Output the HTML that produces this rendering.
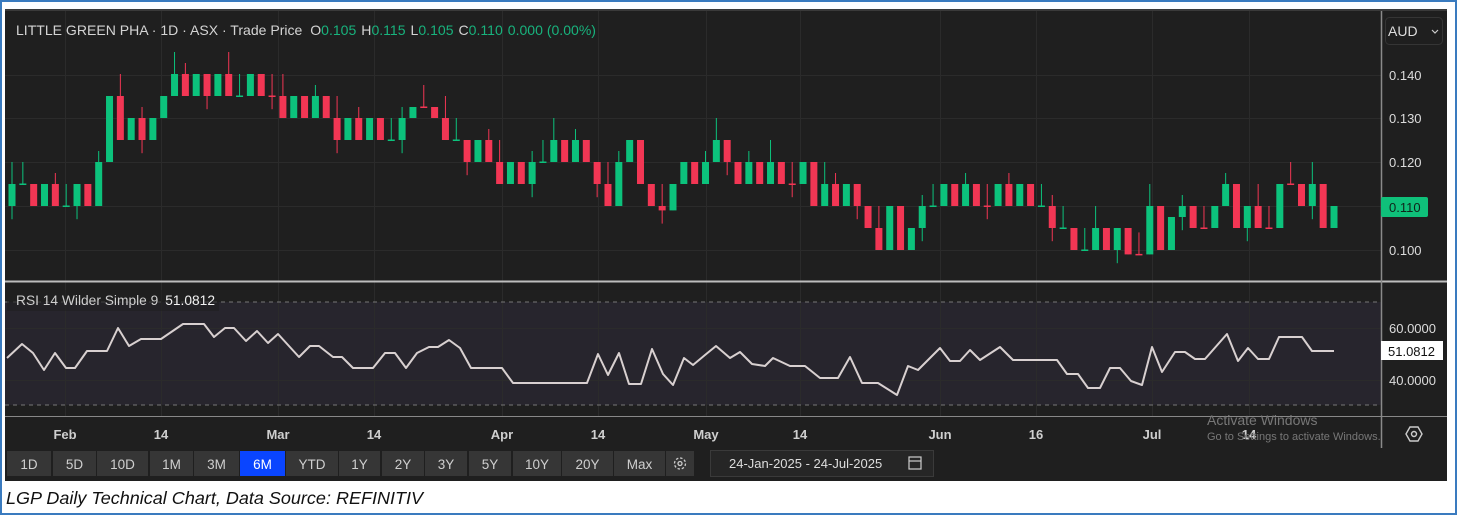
<!DOCTYPE html>
<html><head><meta charset="utf-8"><style>
html,body{margin:0;padding:0;background:#fff;width:1458px;height:516px;overflow:hidden}
svg{display:block;font-family:"Liberation Sans",sans-serif}
</style></head><body>
<svg id="s" width="1458" height="516" viewBox="0 0 1458 516" xmlns="http://www.w3.org/2000/svg">
<rect x="0" y="0" width="1458" height="516" fill="#fff"/>
<rect x="1" y="1" width="1455" height="513" fill="none" stroke="#3a7bbf" stroke-width="2"/>
<rect x="5" y="9" width="1442" height="472" fill="#1f1f1f"/>
<rect x="5" y="9" width="1442" height="2" fill="#3a3a3a"/>
<rect x="5" y="302" width="1376" height="103" fill="#27252d"/>
<g id="grid" stroke="#2b2b2b" stroke-width="1"></g>
<line x1="5" y1="302" x2="1381" y2="302" stroke="#777" stroke-dasharray="4,4"/>
<line x1="5" y1="405" x2="1381" y2="405" stroke="#777" stroke-dasharray="4,4"/>
<g id="candles"></g>
<line x1="5" y1="281.5" x2="1447" y2="281.5" stroke="#bdbdbd" stroke-width="2"/>
<line x1="5" y1="416.5" x2="1447" y2="416.5" stroke="#888" stroke-width="1"/>
<line x1="1381.5" y1="11" x2="1381.5" y2="448" stroke="#8a8a8a" stroke-width="1.5"/>
<polyline fill="none" stroke="#d8d0d0" stroke-width="2" stroke-linejoin="round" points="7,358 22,344 33,353 44,370 55,353 66,368 75,368 87,351 107,351 118,328 129,346 141,339 161,339 183,324 204,324 214,337 225,328 234,328 246,341 257,331 268,343 278,334 299,357 310,346 319,346 333,357 342,357 353,368 373,368 385,353 395,353 406,368 417,353 429,347 438,347 449,340 460,348 471,368 502,368 513,383 587,383 598,354 608,375 619,353 629,384 641,384 652,349 663,374 673,385 684,358 693,365 705,355 716,346 730,358 740,352 752,364 765,366 773,358 790,366 805,366 820,378 838,378 850,357 862,383 878,383 897,395 908,366 918,370 940,348 950,361 960,361 970,350 980,360 1000,347 1013,360 1057,360 1067,374 1078,374 1088,388 1100,388 1110,368 1120,368 1131,381 1142,385 1152,347 1162,372 1175,352 1185,352 1195,359 1205,359 1227,334 1238,361 1248,348 1258,359 1269,359 1279,337 1302,337 1312,351 1334,351"/>
<text x="16" y="35" font-size="14" fill="#d4d4d4" textLength="580" lengthAdjust="spacingAndGlyphs">LITTLE GREEN PHA · 1D · ASX · Trade Price <tspan dx="4">O</tspan><tspan fill="#18b37d">0.105</tspan><tspan dx="5">H</tspan><tspan fill="#18b37d">0.115</tspan><tspan dx="5">L</tspan><tspan fill="#18b37d">0.105</tspan><tspan dx="5">C</tspan><tspan fill="#18b37d">0.110</tspan><tspan dx="5" fill="#18b37d">0.000 (0.00%)</tspan></text>
<rect x="1385.5" y="17.5" width="57" height="27" rx="4" fill="#1f1f1f" stroke="#353535"/>
<text x="1388" y="36" font-size="14" fill="#ddd">AUD</text>
<path d="M1432 30 l3 3 l3 -3" fill="none" stroke="#ccc" stroke-width="1.2"/>
<g font-size="13" fill="#dcdcdc">
<text x="1389" y="80">0.140</text><text x="1389" y="123">0.130</text><text x="1389" y="167">0.120</text><text x="1389" y="255">0.100</text>
<text x="1389" y="333">60.0000</text><text x="1389" y="385">40.0000</text>
</g>
<rect x="1381" y="197" width="47" height="20" rx="2" fill="#0fc07a"/>
<text x="1389" y="212" font-size="13" fill="#10251b">0.110</text>
<rect x="1381" y="341" width="62" height="19" fill="#fff"/>
<text x="1388" y="356" font-size="13" fill="#111">51.0812</text>
<rect x="7" y="290" width="212" height="21" fill="#1f1f1f" opacity="0.6"/>
<text x="16" y="305" font-size="13.5" fill="#cfcfcf" textLength="199" lengthAdjust="spacingAndGlyphs">RSI 14 Wilder Simple 9 <tspan dx="3" fill="#f2f2f2">51.0812</tspan></text>
<g font-size="13" fill="#cfcfcf" font-weight="bold" text-anchor="middle">
<text x="65" y="439">Feb</text><text x="161" y="439">14</text><text x="278" y="439">Mar</text><text x="374" y="439">14</text><text x="502" y="439">Apr</text><text x="598" y="439">14</text><text x="706" y="439">May</text><text x="800" y="439">14</text><text x="940" y="439">Jun</text><text x="1036" y="439">16</text><text x="1152" y="439">Jul</text><text x="1249" y="439">14</text>
</g>
<text x="1207" y="425" font-size="14" fill="#777">Activate Windows</text>
<text x="1207" y="440" font-size="11" fill="#777">Go to Settings to activate Windows.</text>
<g transform="translate(1414,434)" fill="none" stroke="#ccc" stroke-width="1.4"><path d="M-8 0 L-4 -7 L4 -7 L8 0 L4 7 L-4 7 Z"/><circle r="2.5"/></g>
<g id="btns" font-size="13.5" text-anchor="middle"></g>
<rect x="710.5" y="450.5" width="223" height="26" fill="#262626" stroke="#3a3a3a"/>
<text x="729" y="468" font-size="13" fill="#ddd">24-Jan-2025  -  24-Jul-2025</text>
<g fill="none" stroke="#ccc" stroke-width="1.2"><rect x="909" y="457" width="12" height="12"/><line x1="909" y1="461" x2="921" y2="461"/></g>
<text x="6" y="504" font-size="17.5" font-style="italic" fill="#111" textLength="417" lengthAdjust="spacingAndGlyphs">LGP Daily Technical Chart, Data Source: REFINITIV</text>
</svg>
<script>
var NS="http://www.w3.org/2000/svg";
function el(p,t,a){var e=document.createElementNS(NS,t);for(var k in a)e.setAttribute(k,a[k]);p.appendChild(e);return e;}
var g=document.getElementById('grid');
[75,118,162,206,250,328,380].forEach(function(y){el(g,'line',{x1:5,y1:y+.5,x2:1381,y2:y+.5});});
[65,161,278,374,502,598,706,800,940,1036,1152,1249].forEach(function(x){el(g,'line',{x1:x+.5,y1:11,x2:x+.5,y2:416});});
var c=[3,3,2,3,2,2,3,2,4, 7,5,6,5,6,7,8,7,8,7, 8,7,7,8,7,7,6,7,6, 7,6,5,6,5,6,5,5,6, 6.5,6.5,6,5,5,4,5,4,3, 4,3,4,4,5,4,5,4, 3,2,4,5,3,2,1.8,3,4, 3,4,5,4,3,4,3,4,3, 3,4,2,3,2,3,2,1,0, 2,0,1,2,2,3,2,3,2, 2,3,2,3,2,2,1,1,0, 0,1,0,1,-0.2,-0.2,2,0,1.5,2, 1,1,2,3,1,2,1,1,3,3,2,3,1,2];
var n=c.length,sp=(1334-12)/(n-1),cg=document.getElementById('candles');
function Y(l){return 250-22*l;}
for(var i=0;i<n;i++){
 var o=i?c[i-1]:2,cl=c[i],x=12+i*sp;
 var up=cl>o,dn=cl<o,col=up?'#0cc27c':(dn?'#f23654':(i%2?'#0cc27c':'#f23654'));
 var hi=Math.max(o,cl)+((i*7)%5==0?1:((i*3)%4==0?0.5:0)),lo=Math.min(o,cl)-((i*5)%6==0?0.6:0);
 if(o==cl){hi=cl+1;}
 el(cg,'line',{x1:x,y1:Y(hi),x2:x,y2:Y(lo),stroke:col,'stroke-width':1});
 var t=Math.min(Y(o),Y(cl)),h=Math.abs(Y(o)-Y(cl));
 if(h<1.5){el(cg,'rect',{x:x-3.5,y:t-0.5,width:7,height:1.5,fill:col});}
 else el(cg,'rect',{x:x-3.5,y:t,width:7,height:h,fill:col});
}
var b=[["1D",7,51],["5D",53,96],["10D",97,148],["1M",150,193],["3M",194,239],["6M",240,285],["YTD",286,338],["1Y",339,380],["2Y",382,424],["3Y",425,467],["5Y",469,511],["10Y",513,561],["20Y",562,613],["Max",614,665]];
var bg=document.getElementById('btns');
b.forEach(function(a){el(bg,'rect',{x:a[1],y:451,width:a[2]-a[1],height:25,fill:a[0]=='6M'?'#0a45ff':'#363636'});var t=el(bg,'text',{x:(a[1]+a[2])/2,y:469,fill:a[0]=='6M'?'#fff':'#cfcfcf'});t.textContent=a[0];});
el(bg,'rect',{x:666,y:451,width:28,height:25,fill:'#363636'});
var gg=el(bg,'g',{transform:'translate(680,463.5)',fill:'none',stroke:'#ccc','stroke-width':1.3});
el(gg,'circle',{r:5.5,'stroke-dasharray':'2.5,1.8'});el(gg,'circle',{r:2});
</script>
</body></html>
